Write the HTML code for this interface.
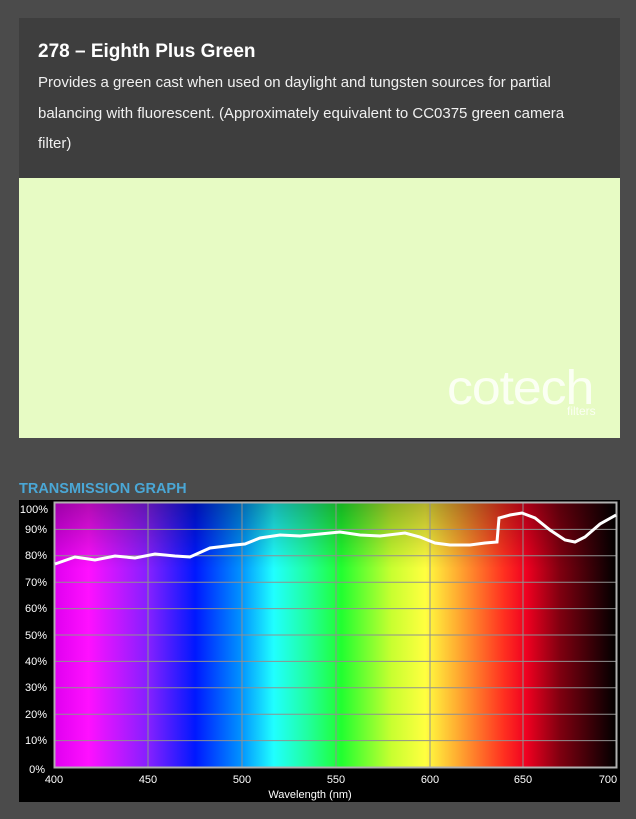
<!DOCTYPE html>
<html><head><style>
body{margin:0;width:636px;height:819px;background:#4b4b4b;font-family:"Liberation Sans",sans-serif;position:relative;overflow:hidden}
.card{position:absolute;left:19px;top:18px;width:601px;height:160px;background:#3e3e3e;color:#fff}
.card h1{margin:0;position:absolute;left:19px;top:23px;font-size:19px;font-weight:bold}
.card p{margin:0;position:absolute;left:19px;top:50px;width:530px;font-size:15px;line-height:30.5px;color:#f0f0f0}
.sw{position:absolute;left:19px;top:178px;width:601px;height:260px;background:#e7fbc4}
.tt{position:absolute;left:19px;top:481px;color:#4aa7d6;font-weight:bold;font-size:14.5px}
.g{position:absolute;left:19px;top:500px;width:601px;height:302px;background:#000}
</style></head><body>
<div class="card"><h1>278 – Eighth Plus Green</h1><p>Provides a green cast when used on daylight and tungsten sources for partial balancing with fluorescent. (Approximately equivalent to CC0375 green camera filter)</p></div>
<div class="sw"><div style="position:absolute;left:428px;top:183px;color:#fbfff3;font-size:48px;letter-spacing:-1px;transform:scaleX(1.08);transform-origin:left">cotech</div><div style="position:absolute;left:548px;top:226px;color:#fbfff3;font-size:12px">filters</div></div>
<div class="tt">TRANSMISSION GRAPH</div>
<div class="g"></div>
<svg style="position:absolute;left:0;top:0" width="636" height="819">
<defs>
<linearGradient id="sp" x1="55" x2="616" y1="0" y2="0" gradientUnits="userSpaceOnUse">
<stop offset="0" stop-color="#e000f0"/><stop offset="0.06" stop-color="#ff10ff"/><stop offset="0.17" stop-color="#8020ff"/><stop offset="0.25" stop-color="#0018ff"/><stop offset="0.33" stop-color="#0090ff"/><stop offset="0.39" stop-color="#20ffff"/><stop offset="0.45" stop-color="#20ffa0"/><stop offset="0.51" stop-color="#20ff30"/><stop offset="0.6" stop-color="#c8ff30"/><stop offset="0.66" stop-color="#ffff40"/><stop offset="0.72" stop-color="#ffa830"/><stop offset="0.8" stop-color="#ff3020"/><stop offset="0.84" stop-color="#f00020"/><stop offset="0.9" stop-color="#800010"/><stop offset="1" stop-color="#000"/></linearGradient>
<linearGradient id="dk" x1="0" x2="0" y1="0" y2="1"><stop offset="0" stop-color="#000" stop-opacity=".3"/><stop offset=".25" stop-color="#000" stop-opacity="0"/></linearGradient>
</defs>
<rect x="55" y="503" width="561" height="264" fill="url(#sp)"/>
<rect x="55" y="503" width="561" height="264" fill="url(#dk)"/>
<g stroke="#909090" stroke-width="1">
<path d="M148 503V767M242 503V767M336 503V767M430 503V767M523 503V767"/>
<path d="M55 529.4H616M55 555.8H616M55 582.2H616M55 608.6H616M55 635H616M55 661.4H616M55 687.8H616M55 714.2H616M55 740.6H616"/>
</g>
<rect x="54.5" y="502.5" width="562" height="265" fill="none" stroke="#b0b0b0" stroke-width="2"/>
<polyline fill="none" stroke="#fff" stroke-width="3" points="55,564 75,557 95,560 115,556 135,558 155,554 175,556 190,557 210,548 235,545 245,544 260,538 280,535 300,536 320,534 340,532 360,535 380,536 405,533 420,537 435,543 450,545 470,545 485,543 497,542 499,518 510,515 522,513 535,518 550,530 565,540 575,542 585,537 600,524 616,515"/>
<g fill="#fff" font-size="11" font-family="Liberation Sans,sans-serif" text-anchor="end">
<text x="48" y="513">100%</text><text x="47" y="533">90%</text><text x="47" y="559">80%</text><text x="47" y="586">70%</text><text x="47" y="612">60%</text><text x="47" y="639">50%</text><text x="47" y="665">40%</text><text x="47" y="691">30%</text><text x="47" y="718">20%</text><text x="47" y="744">10%</text><text x="45" y="773">0%</text>
</g>
<g fill="#fff" font-size="11" font-family="Liberation Sans,sans-serif" text-anchor="middle">
<text x="54" y="783">400</text><text x="148" y="783">450</text><text x="242" y="783">500</text><text x="336" y="783">550</text><text x="430" y="783">600</text><text x="523" y="783">650</text><text x="608" y="783">700</text>
<text x="310" y="798">Wavelength (nm)</text>
</g>
</svg>
</body></html>
